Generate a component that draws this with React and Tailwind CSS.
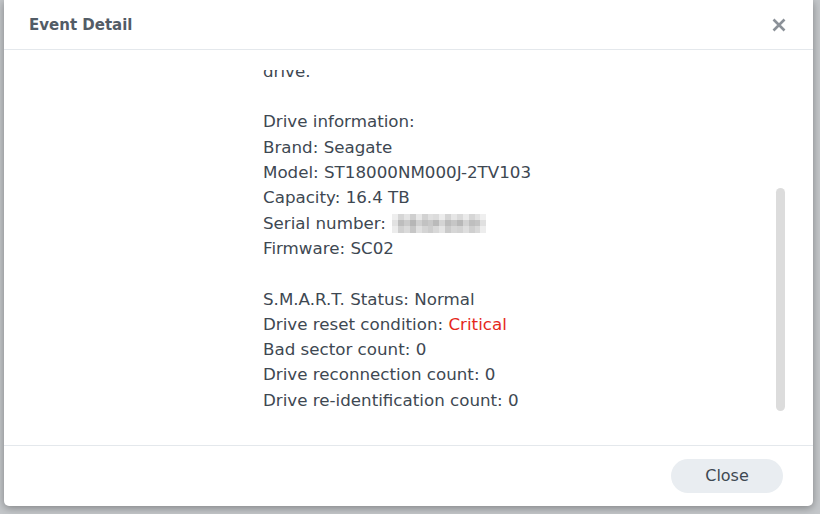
import React from 'react';

const lines = [
  'Drive information:',
  'Brand: Seagate',
  'Model: ST18000NM000J-2TV103',
  'Capacity: 16.4 TB',
];

const blur = [
  ['#eeeeee', '#d6d6d6', '#e4e4e4', '#cfcfcf', '#e8e8e8', '#d2d2d2', '#e0e0e0', '#dcdcdc', '#ececec', '#d4d4d4', '#e6e6e6', '#dadada', '#eaeaea', '#d6d6d6', '#e2e2e2', '#efefef'],
  ['#e2e2e2', '#bdbdbd', '#cacaca', '#b6b6b6', '#d0d0d0', '#c2c2c2', '#c8c8c8', '#bababa', '#d4d4d4', '#bcbcbc', '#c6c6c6', '#b8b8b8', '#d2d2d2', '#bfbfbf', '#c4c4c4', '#e0e0e0'],
  ['#ececec', '#d0d0d0', '#dadada', '#c6c6c6', '#e0e0e0', '#d4d4d4', '#cdcdcd', '#d8d8d8', '#e4e4e4', '#cacaca', '#d6d6d6', '#d2d2d2', '#dedede', '#cfcfcf', '#d9d9d9', '#ededed'],
];

export default function App() {
  return (
    <div className="w-[820px] h-[514px] bg-[#c4c7ca] overflow-hidden" style={{ fontFamily: '"DejaVu Sans", Verdana, sans-serif' }}>
      <div className="ml-[4px] w-[809px] h-[506px] bg-white rounded-b-[5px] shadow-[0_2px_8px_rgba(0,0,0,0.35)] flex flex-col">
        <div className="h-[50px] shrink-0 border-b border-[#e4e8ec] flex items-center justify-between pl-[25px] pr-[27px] pt-[1px]">
          <span className="text-[15px] font-bold text-[#525c66]">Event Detail</span>
          <svg width="14" height="14" viewBox="0 0 14 14" className="text-[#8b9198]">
            <path d="M1.5 1.5 L12.5 12.5 M12.5 1.5 L1.5 12.5" stroke="currentColor" strokeWidth="2.6" strokeLinecap="butt" />
          </svg>
        </div>
        <div className="relative h-[395px] shrink-0 pt-[20px]">
          <div className="ml-[259px] h-[343px] overflow-hidden flex flex-col justify-end text-[16.7px] leading-[25.3px] text-[#3e4852] [&>*]:shrink-0">
            <div>Disk reset was detected on the</div>
            <div>drive.</div>
            <div className="h-[25.3px]"></div>
            {lines.map((l) => (
              <div key={l}>{l}</div>
            ))}
            <div className="flex items-center">
              <span>Serial number:&nbsp;</span>
              <span className="flex flex-col w-[94px] h-[19px] ml-[1px]">
                {blur.map((row, i) => (
                  <span key={i} className="flex flex-1">
                    {row.map((c, j) => (
                      <span key={j} className="flex-1" style={{ backgroundColor: c }}></span>
                    ))}
                  </span>
                ))}
              </span>
            </div>
            <div>Firmware: SC02</div>
            <div className="h-[25.3px]"></div>
            <div>S.M.A.R.T. Status: Normal</div>
            <div>
              Drive reset condition: <span className="text-[#e5281c]">Critical</span>
            </div>
            <div>Bad sector count: 0</div>
            <div>Drive reconnection count: 0</div>
            <div>Drive re-identification count: 0</div>
          </div>
          <div className="absolute left-[772px] top-[138px] w-[9px] h-[223px] rounded-full bg-[#dcdcdc]"></div>
        </div>
        <div className="flex-1 border-t border-[#e4e8ec] flex items-center justify-end pr-[30px]">
          <button className="w-[112px] h-[34px] rounded-full bg-[#e9edf1] text-[16px] text-[#3e4852]">Close</button>
        </div>
      </div>
    </div>
  );
}
